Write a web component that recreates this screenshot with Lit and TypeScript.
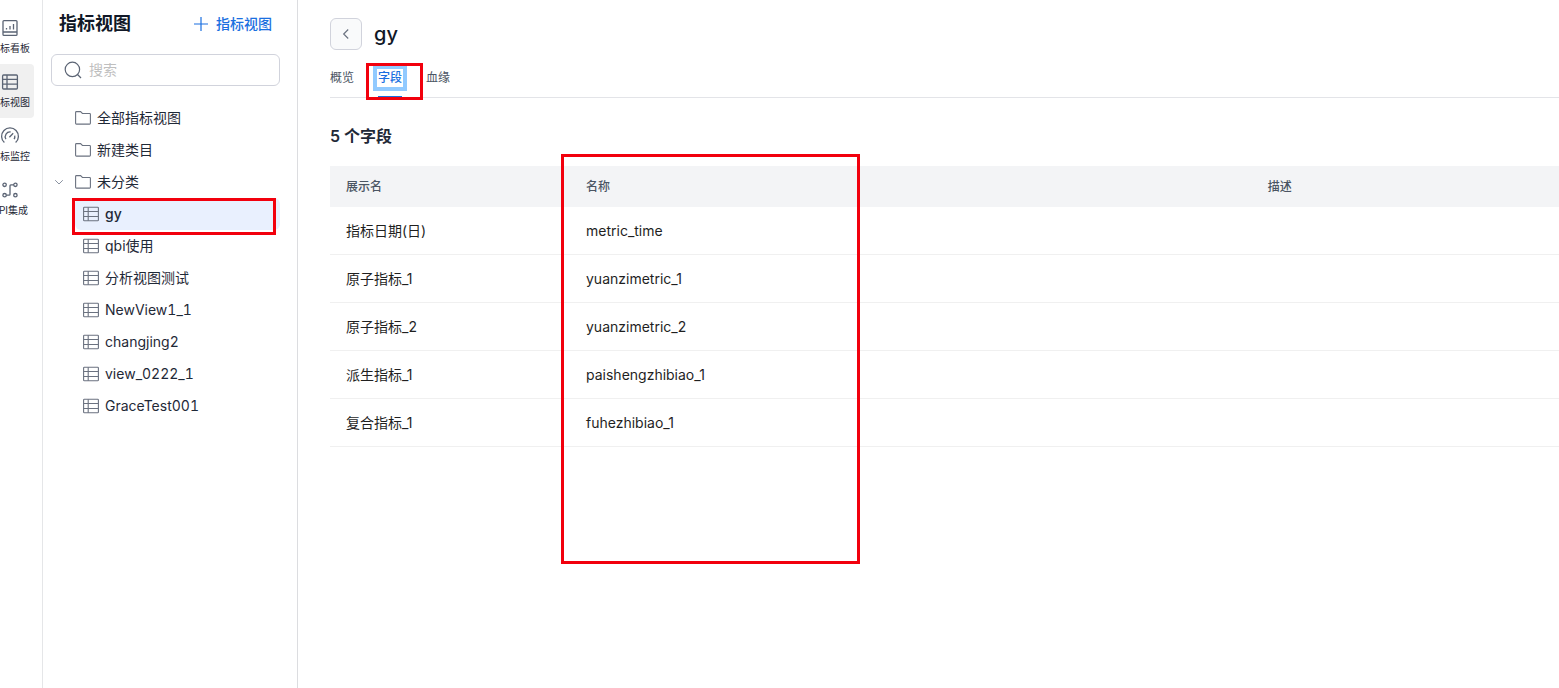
import { LitElement, html, css, svg } from "lit";
import { customElement, property, state } from "lit/decorators.js";
import { classMap } from "lit/directives/class-map.js";

const base = css`
  :host,
  * {
    box-sizing: border-box;
  }
  button {
    font: inherit;
    color: inherit;
    background: none;
    border: 0;
    margin: 0;
    padding: 0;
    cursor: pointer;
  }
  svg {
    display: block;
    flex: none;
    fill: none;
    stroke: currentColor;
  }
  .mark {
    position: absolute;
    border: 3px solid #f2000d;
    pointer-events: none;
    z-index: 2;
  }
`;

const sheet = svg`
  <rect x="0.6" y="1.2" width="14.8" height="13.6" rx="0.8"></rect>
  <path d="M0.6 5.5H15.4M0.6 10.5H15.4M5.2 1.2V14.8"></path>`;

const railIcons: Record<string, unknown> = {
  board: svg`
    <rect x="1" y="0.6" width="14" height="14.8" rx="1"></rect>
    <path d="M1 12H15M4.5 9.5V8M8 9.5V6M11.5 9.5V4"></path>`,
  sheet: svg`
    <rect x="0.6" y="1" width="14.8" height="14" rx="1"></rect>
    <path d="M0.6 5.4H15.4M0.6 10.2H15.4M5 1V15"></path>`,
  gauge: svg`
    <path d="M2.4 14.6A8.4 8.4 0 1 1 13.6 14.6"></path>
    <path d="M3.9 11.2A4.8 4.8 0 0 1 8.6 4M12.7 7.6A4.8 4.8 0 0 1 12.1 11.2M7.4 9.2L11.2 5.2"></path>`,
  api: svg`
    <circle cx="2.6" cy="2.8" r="1.7"></circle>
    <circle cx="13.4" cy="2.8" r="1.7"></circle>
    <circle cx="2.6" cy="13.2" r="1.7"></circle>
    <circle cx="13.4" cy="13.2" r="1.7"></circle>
    <path d="M11.7 2.8H8.9Q8 2.8 8 3.7V12.3Q8 13.2 7.1 13.2H4.3"></path>`,
};

@customElement("app-rail")
export class AppRail extends LitElement {
  static styles = [
    base,
    css`
      :host {
        display: block;
        flex: none;
        width: 43px;
        overflow: hidden;
        border-right: 1px solid #e5e6e8;
      }
      .items {
        display: flex;
        flex-direction: column;
        width: 64px;
        margin-left: -22px;
        padding: 10px 8px;
      }
      .item {
        display: flex;
        flex-direction: column;
        align-items: center;
        gap: 4px;
        height: 54px;
        padding-top: 10px;
        border-radius: 4px;
        font-size: 10px;
        line-height: 16px;
        white-space: nowrap;
        color: #1f2937;
      }
      .item svg {
        color: #5b6474;
      }
      .item.on {
        background: #f0f0f0;
      }
    `,
  ];

  private items = [
    { icon: "board", label: "指标看板" },
    { icon: "sheet", label: "指标视图" },
    { icon: "gauge", label: "指标监控" },
    { icon: "api", label: "API集成" },
  ];

  @state() private active = "sheet";

  render() {
    return html`<nav class="items">
      ${this.items.map(
        (i) => html`<button
          class=${classMap({ item: true, on: i.icon === this.active })}
          @click=${() => (this.active = i.icon)}
        >
          <svg width="16" height="16" viewBox="0 0 16 16" stroke-width="1.3" overflow="visible">
            ${railIcons[i.icon]}
          </svg>
          <span>${i.label}</span>
        </button>`
      )}
    </nav>`;
  }
}

@customElement("view-sidebar")
export class ViewSidebar extends LitElement {
  static styles = [
    base,
    css`
      :host {
        display: block;
        flex: none;
        width: 255px;
        padding: 8px 17px 0 8px;
        border-right: 1px solid #dcdde0;
        color: #1f2937;
      }
      .head {
        display: flex;
        align-items: center;
        justify-content: space-between;
        height: 32px;
        padding: 0 8px;
      }
      .title {
        margin: 0;
        font-size: 18px;
        line-height: 24px;
        font-weight: 600;
        color: #111827;
      }
      .add {
        display: flex;
        align-items: center;
        gap: 8px;
        font-size: 14px;
        font-weight: 500;
        color: #1a6fe0;
      }
      .search {
        display: flex;
        align-items: center;
        gap: 7px;
        height: 32px;
        margin-top: 14px;
        padding: 0 12px;
        border: 1px solid #d1d3dc;
        border-radius: 6px;
        color: #5b6474;
      }
      .search input {
        flex: 1;
        min-width: 0;
        padding: 0;
        border: 0;
        outline: 0;
        background: none;
        font: inherit;
        color: #1f2937;
      }
      .search input::placeholder {
        color: #bfbfbf;
      }
      .tree {
        margin: 16px 0 0;
        padding: 0;
        list-style: none;
        font-variant-numeric: tabular-nums;
      }
      .node {
        position: relative;
      }
      .row {
        display: flex;
        align-items: center;
        gap: 6px;
        width: 100%;
        height: 32px;
        text-align: left;
        font-size: 14px;
        line-height: 22px;
      }
      .row svg {
        color: #6b7280;
      }
      .row .caret {
        width: 16px;
        margin-right: 2px;
        color: #8b93a1;
      }
      .leaf {
        margin-left: 24px;
      }
      .leaf .row {
        padding-left: 8px;
        border-radius: 6px;
      }
      .leaf.on .row {
        background: #e9f0fe;
        font-weight: 500;
      }
      .mark {
        inset: 0 4px -5px -3px;
      }
    `,
  ];

  @property() current = "";

  private folders = ["全部指标视图", "新建类目", "未分类"];
  private views = ["gy", "qbi使用", "分析视图测试", "NewView1_1", "changjing2", "view_0222_1", "GraceTest001"];

  private pick(view: string) {
    this.dispatchEvent(new CustomEvent("pick", { detail: view }));
  }

  render() {
    return html`
      <div class="head">
        <h2 class="title">指标视图</h2>
        <button class="add">
          <svg width="14" height="14" viewBox="0 0 14 14" stroke-width="1.2"><path d="M7 0V14M0 7H14"></path></svg>
          指标视图
        </button>
      </div>
      <label class="search">
        <svg width="18" height="18" viewBox="0 0 18 18" stroke-width="1.2">
          <circle cx="8.4" cy="8.4" r="7.2"></circle>
          <path d="M13.5 13.5L17 17"></path>
        </svg>
        <input type="text" placeholder="搜索" aria-label="搜索" />
      </label>
      <ul class="tree">
        ${this.folders.map(
          (f, n) => html`<li class="node">
            <button class="row">
              <svg class="caret" height="8" viewBox="0 0 16 8">
                ${n === this.folders.length - 1 ? svg`<path d="M4.2 2.2L8 6L11.8 2.2"></path>` : ""}
              </svg>
              <svg width="16" height="16" viewBox="0 0 16 16" stroke-width="1.1">
                <path d="M0.6 2.4Q0.6 1.6 1.4 1.6H5.6L7.4 3.5H14.6Q15.4 3.5 15.4 4.3V13.3Q15.4 14.1 14.6 14.1H1.4Q0.6 14.1 0.6 13.3Z"></path>
              </svg>
              <span>${f}</span>
            </button>
          </li>`
        )}
        ${this.views.map(
          (v) => html`<li class=${classMap({ node: true, leaf: true, on: v === this.current })}>
            <button class="row" @click=${() => this.pick(v)}>
              <svg width="16" height="16" viewBox="0 0 16 16" stroke-width="1.1">${sheet}</svg>
              <span>${v}</span>
            </button>
            ${v === this.current ? html`<span class="mark"></span>` : ""}
          </li>`
        )}
      </ul>
    `;
  }
}

@customElement("view-detail")
export class ViewDetail extends LitElement {
  static styles = [
    base,
    css`
      :host {
        display: block;
        flex: 1;
        min-width: 0;
        padding: 18px 0 0 32px;
        color: #1f1f1f;
      }
      .head {
        display: flex;
        align-items: center;
        gap: 12px;
      }
      .back {
        display: grid;
        place-items: center;
        width: 32px;
        height: 32px;
        border: 1px solid #d1d3dc;
        border-radius: 6px;
        background: #f9fafb;
        color: #6b7280;
      }
      .name {
        margin: 0;
        font-size: 20px;
        line-height: 28px;
        font-weight: 500;
        color: #111827;
      }
      .tabs {
        display: flex;
        gap: 24px;
        height: 48px;
        border-bottom: 1px solid #e3e4e8;
      }
      .tab {
        position: relative;
        display: flex;
        align-items: center;
        margin-bottom: -1px;
        padding-top: 8px;
        font-size: 12px;
        line-height: 16px;
        color: #4b5563;
      }
      .tab.on {
        color: #1a6fe0;
        font-weight: 500;
        outline: 0;
        box-shadow: inset 0 -2px #1a6fe0;
      }
      .tab.on .label {
        outline: 4px solid #91caff;
        outline-offset: 1px;
      }
      .tab .mark {
        inset: 13px -21px -2px -12px;
      }
      .count {
        margin: 26px 0 18px;
        font-size: 16px;
        line-height: 24px;
        font-weight: 600;
        color: #1f2937;
      }
      table {
        width: 100%;
        table-layout: fixed;
        border-collapse: separate;
        border-spacing: 0;
        text-align: left;
      }
      .first {
        width: 240px;
      }
      .last {
        width: 25%;
      }
      th {
        position: relative;
        height: 41px;
        padding: 0 16px;
        background: #f3f4f6;
        font-size: 12px;
        line-height: 20px;
        font-weight: 500;
        color: #4b5563;
      }
      td {
        height: 48px;
        padding: 0 16px;
        border-bottom: 1px solid #f0f0f0;
        font-size: 14px;
        line-height: 22px;
      }
      th .mark {
        top: -12px;
        left: -9px;
        width: 299px;
        height: 410px;
      }
    `,
  ];

  @property() name = "";
  @state() private tab = "字段";

  private fields = [
    ["指标日期(日)", "metric_time", ""],
    ["原子指标_1", "yuanzimetric_1", ""],
    ["原子指标_2", "yuanzimetric_2", ""],
    ["派生指标_1", "paishengzhibiao_1", ""],
    ["复合指标_1", "fuhezhibiao_1", ""],
  ];

  render() {
    return html`
      <header class="head">
        <button class="back" aria-label="返回">
          <svg width="8" height="12" viewBox="0 0 8 12" stroke-width="1.2"><path d="M6.2 1.5L1.7 6L6.2 10.5"></path></svg>
        </button>
        <h1 class="name">${this.name}</h1>
      </header>
      <div class="tabs" role="tablist">
        ${["概览", "字段", "血缘"].map(
          (t) => html`<button
            class=${classMap({ tab: true, on: t === this.tab })}
            role="tab"
            aria-selected=${t === this.tab}
            @click=${() => (this.tab = t)}
          >
            <span class="label">${t}</span>
            ${t === this.tab ? html`<span class="mark"></span>` : ""}
          </button>`
        )}
      </div>
      <h3 class="count">${this.fields.length} 个字段</h3>
      <table>
        <thead>
          <tr>
            <th class="first">展示名</th>
            <th>名称<span class="mark"></span></th>
            <th class="last">描述</th>
          </tr>
        </thead>
        <tbody>
          ${this.fields.map((r) => html`<tr>${r.map((c) => html`<td>${c}</td>`)}</tr>`)}
        </tbody>
      </table>
    `;
  }
}

@customElement("app-root")
export class AppRoot extends LitElement {
  static styles = css`
    :host {
      display: flex;
      min-height: 100vh;
      background: #fff;
      font-family: Inter, "Noto Sans CJK SC", sans-serif;
      font-size: 14px;
      line-height: 22px;
    }
  `;

  @state() private current = "gy";

  render() {
    return html`
      <app-rail></app-rail>
      <view-sidebar
        .current=${this.current}
        @pick=${(e: CustomEvent<string>) => (this.current = e.detail)}
      ></view-sidebar>
      <view-detail .name=${this.current}></view-detail>
    `;
  }
}
